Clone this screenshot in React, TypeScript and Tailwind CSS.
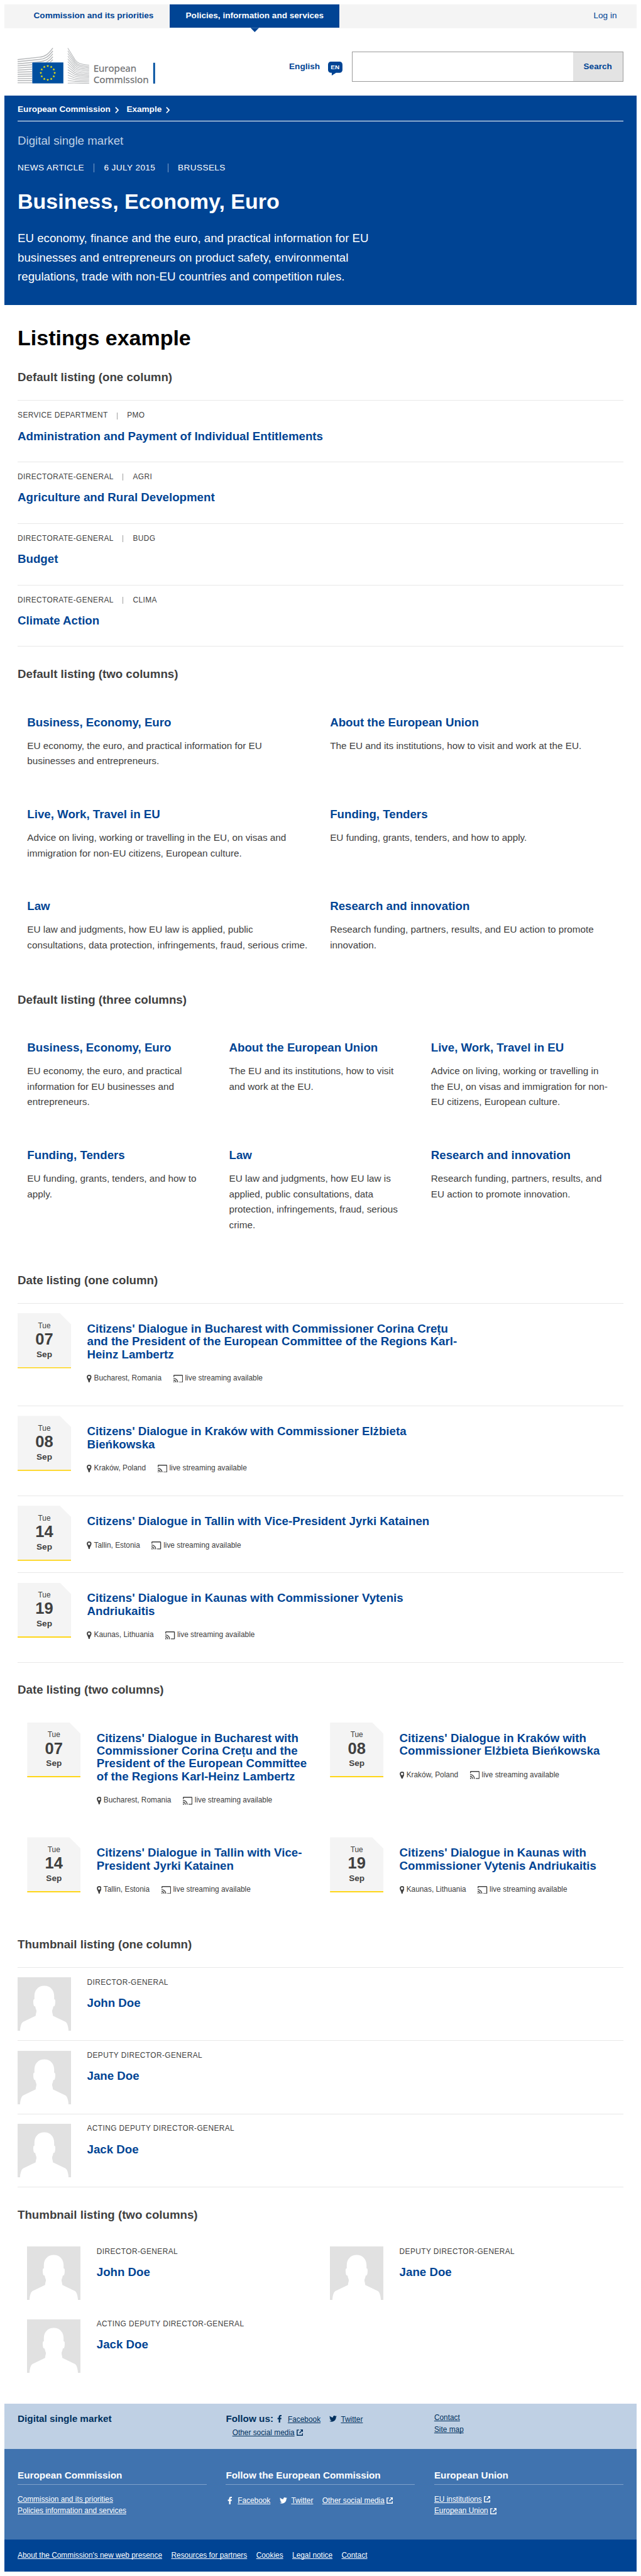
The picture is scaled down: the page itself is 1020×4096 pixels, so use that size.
import React from "react";
import { FaFacebookF, FaTwitter } from "react-icons/fa";

const topics = {
  business: {
    title: "Business, Economy, Euro",
    text: "EU economy, the euro, and practical information for EU businesses and entrepreneurs.",
  },
  about: {
    title: "About the European Union",
    text: "The EU and its institutions, how to visit and work at the EU.",
  },
  live: {
    title: "Live, Work, Travel in EU",
    text: "Advice on living, working or travelling in the EU, on visas and immigration for non-EU citizens, European culture.",
  },
  funding: {
    title: "Funding, Tenders",
    text: "EU funding, grants, tenders, and how to apply.",
  },
  law: {
    title: "Law",
    text: "EU law and judgments, how EU law is applied, public consultations, data protection, infringements, fraud, serious crime.",
  },
  research: {
    title: "Research and innovation",
    text: "Research funding, partners, results, and EU action to promote innovation.",
  },
};

const topicList = [
  topics.business,
  topics.about,
  topics.live,
  topics.funding,
  topics.law,
  topics.research,
];

const departments = [
  { kind: "Service Department", code: "PMO", title: "Administration and Payment of Individual Entitlements" },
  { kind: "Directorate-General", code: "AGRI", title: "Agriculture and Rural Development" },
  { kind: "Directorate-General", code: "BUDG", title: "Budget" },
  { kind: "Directorate-General", code: "CLIMA", title: "Climate Action" },
];

const events = [
  {
    day: "07",
    title:
      "Citizens' Dialogue in Bucharest with Commissioner Corina Crețu and the President of the European Committee of the Regions Karl-Heinz Lambertz",
    place: "Bucharest, Romania",
  },
  {
    day: "08",
    title: "Citizens' Dialogue in Kraków with Commissioner Elżbieta Bieńkowska",
    place: "Kraków, Poland",
  },
  {
    day: "14",
    title: "Citizens' Dialogue in Tallin with Vice-President Jyrki Katainen",
    place: "Tallin, Estonia",
  },
  {
    day: "19",
    title: "Citizens' Dialogue in Kaunas with Commissioner Vytenis Andriukaitis",
    place: "Kaunas, Lithuania",
  },
];

const people = [
  { role: "Director-General", name: "John Doe" },
  { role: "Deputy Director-General", name: "Jane Doe" },
  { role: "Acting Deputy Director-General", name: "Jack Doe" },
];

function starPoints(cx: number, cy: number, r: number) {
  return Array.from({ length: 10 }, (_, i) => {
    const a = (Math.PI / 5) * i - Math.PI / 2;
    const q = i % 2 === 0 ? r : r * 0.4;
    return `${(cx + q * Math.cos(a)).toFixed(2)},${(cy + q * Math.sin(a)).toFixed(2)}`;
  }).join(" ");
}

function Logo() {
  const left = Array.from({ length: 12 }, (_, i) => {
    const y = 22 + i * 3.95;
    const rise = Math.max(0, 1 - i / 11);
    const mid = y - 4.5 * rise;
    const end = i < 6 ? 0.5 + i * 5.4 : mid;
    return i < 6
      ? `M0 ${y} L41 ${mid} C52 ${mid - 1} 58 ${mid - 6 + i * 0.6} 66 ${end}`
      : `M0 ${y} L66 ${mid}`;
  });
  const right = Array.from({ length: 14 }, (_, i) => {
    const y0 = 0.5 + i * 5.05;
    const y1 = 32.6 + i * 2.6;
    const t = i / 13;
    const ky = 27 + i * 3;
    return `M94 ${y0} L${108 - 2 * t} ${ky - 4 + 4 * t} C${112} ${ky + 2 - 2 * t} ${116} ${y1 - 2.4 * (1 - t)} 134 ${y1}`;
  });
  return (
    <svg className="block h-[76px] w-[258px] shrink-0" viewBox="0 0 258 76">
      <g fill="none" stroke="#b5b7b9">
        {left.map((d) => (
          <path key={d} d={d} strokeWidth="1.7" />
        ))}
        {right.map((d) => (
          <path key={d} d={d} strokeWidth="1.2" />
        ))}
      </g>
      <rect x="27" y="27" width="59.2" height="40" fill="#fff" />
      <rect x="27.5" y="27.4" width="58.2" height="39.2" fill="#004f9f" />
      {Array.from({ length: 12 }, (_, i) => {
        const a = (Math.PI / 6) * i;
        return (
          <polygon
            key={i}
            points={starPoints(56.5 + 13 * Math.cos(a), 47 + 13 * Math.sin(a), 2.6)}
            fill="#ffed00"
          />
        );
      })}
      <g fill="#6a6b6e" stroke="#6a6b6e" strokeWidth="0.3" fontFamily="'Open Sans', sans-serif" fontSize="17.2">
        <text x="142" y="45.3" textLength="80.5" lengthAdjust="spacingAndGlyphs">
          European
        </text>
        <text x="142" y="66" textLength="103.5" lengthAdjust="spacingAndGlyphs">
          Commission
        </text>
      </g>
      <rect x="254" y="28" width="3.4" height="39" fill="#004f9f" />
    </svg>
  );
}

function Chevron() {
  return (
    <svg className="h-[12px] w-[8px]" viewBox="0 0 8 12" fill="none" stroke="#fff" strokeWidth="2">
      <path d="M1 0.8 6 6 1 11.2" />
    </svg>
  );
}

function ExternalIcon() {
  return (
    <svg className="h-[12px] w-[12px]" viewBox="0 0 12 12" fill="none" stroke="currentColor">
      <path d="M4.5 1H1v10h10V7.2" strokeWidth="1.7" />
      <path d="M5.3 6.8 9.2 2.9" strokeWidth="1.9" />
      <path d="M6.6 0H12v5.4z" fill="currentColor" stroke="none" />
    </svg>
  );
}

function PinIcon() {
  return (
    <svg className="h-[14px] w-[9px]" viewBox="0 0 9 14">
      <path
        fill="#404040"
        fillRule="evenodd"
        d="M4.5 0A4.4 4.4 0 0 0 .1 4.4C.1 7.2 2.9 9.5 3.5 14h2C6.1 9.5 8.9 7.2 8.9 4.4A4.4 4.4 0 0 0 4.5 0zm0 2.2a2.2 2.3 0 1 1 0 4.6 2.2 2.3 0 0 1 0-4.6z"
      />
    </svg>
  );
}

function CastIcon() {
  return (
    <svg className="h-[15px] w-[18px]" viewBox="1 3 22 18" fill="#404040">
      <path d="M1 18v3h3c0-1.66-1.34-3-3-3zm0-4v2c2.76 0 5 2.24 5 5h2c0-3.87-3.13-7-7-7zm0-4v2c4.97 0 9 4.03 9 9h2c0-6.08-4.93-11-11-11zm20-7H3c-1.1 0-2 .9-2 2v3h2V5h18v14h-7v2h7c1.1 0 2-.9 2-2V5c0-1.1-.9-2-2-2z" />
    </svg>
  );
}

function Avatar() {
  return (
    <svg className="block h-[100px] w-[100px] shrink-0 bg-[#e1e1e1]" viewBox="0 0 100 100">
      <path
        fill="#fff"
        d="M50 16C38 16 31.5 25 31.5 35V41C29 41 29.3 45 29.5 48 29.8 52 30.5 55 33 54.5 33.6 58 34.5 60 35.2 62 35.8 65 34.2 67 33.8 72L10 83.5C6.5 86 4.8 94 4.6 100H95.4C95.2 94 93.5 86 90 83.5L66.2 72C65.8 67 64.2 65 64.8 62 65.5 60 66.4 58 67 54.5 69.5 55 70.2 52 70.5 48 70.7 45 71 41 68.5 41V35C68.5 25 62 16 50 16z"
      />
    </svg>
  );
}

function SectionTitle({ children }: { children: React.ReactNode }) {
  return <h2 className="text-[22px] leading-[28px] font-bold text-[#404040]">{children}</h2>;
}

function Topic({ title, text }: { title: string; text: string }) {
  return (
    <div className="px-[18px] pt-[36px] pb-[35px]">
      <h3 className="text-[22px] leading-[28px] font-bold text-[#004494]">{title}</h3>
      <p className="mt-[15.5px] text-[18px] leading-[28.8px] text-[#404040]">{text}</p>
    </div>
  );
}

function DateBlock({ day }: { day: string }) {
  return (
    <div className="flex h-[103px] w-[100px] shrink-0 flex-col items-center border-b-[3px] border-[#ffd617] bg-[#f4f4f4] pt-[16px] text-[#404040] [clip-path:polygon(0_0,79px_0,100px_21px,100px_103px,0_103px)]">
      <span className="text-[14px] leading-[16px]">Tue</span>
      <span className="mt-[2px] text-[30px] leading-[30px] font-bold">{day}</span>
      <span className="mt-[2.5px] text-[16px] leading-[20px] font-bold">Sep</span>
    </div>
  );
}

function EventBody({ title, place }: { title: string; place: string }) {
  return (
    <div className="ml-[30px] max-w-[700px] pt-[17.5px] pb-[42.5px]">
      <h3 className="text-[22px] leading-[24px] font-bold text-[#004494]">{title}</h3>
      <div className="mt-[25px] flex h-[16px] items-center text-[14px] leading-[16px] whitespace-nowrap text-[#404040]">
        <PinIcon />
        <span className="ml-[4px]">{place}</span>
        <span className="ml-[22px]">
          <CastIcon />
        </span>
        <span className="ml-[4px]">live streaming available</span>
      </div>
    </div>
  );
}

function PersonBody({ role, name }: { role: string; name: string }) {
  return (
    <div className="ml-[30px] pt-[1.5px]">
      <p className="text-[14px] leading-[16px] tracking-[0.5px] text-[#404040] uppercase">{role}</p>
      <h3 className="mt-[16px] text-[22px] leading-[28px] font-bold text-[#004494]">{name}</h3>
    </div>
  );
}

function Link({ children }: { children: React.ReactNode }) {
  return <a className="self-start underline [text-decoration-skip-ink:none]">{children}</a>;
}

function Header() {
  return (
    <header>
      <nav className="flex h-[45px] bg-[#f4f4f4] text-[16px] leading-[43px] whitespace-nowrap">
        <a className="w-[310px] pl-[55px] font-bold text-[#004494]">Commission and its priorities</a>
        <a className="relative h-[44px] w-[318px] bg-[#004494] text-center font-bold text-white">
          Policies, information and services
          <span className="absolute top-[44px] left-[151px] h-[8px] w-[16px] bg-[#004494] [clip-path:polygon(0_0,100%_0,50%_100%)]" />
        </a>
        <a className="mr-[37px] ml-auto text-[#004494]">Log in</a>
      </nav>
      <div className="flex h-[126px] items-start px-[25px] pt-[36px]">
        <Logo />
        <div className="mt-[7px] ml-auto flex h-[57px] items-center">
          <span className="text-[16px] leading-[57px] font-bold text-[#004494]">English</span>
          <svg className="mt-[7px] mr-[18px] ml-[15px] h-[26px] w-[27px]" viewBox="0 0 27 26">
            <path
              fill="#004494"
              d="M5.5 0h16A5.5 5.5 0 0 1 27 5.500v10a5.500 5.500 0 0 1-5.500 5.500H15l-8 5v-5H5.500A5.500 5.500 0 0 1 0 15.500v-10A5.500 5.500 0 0 1 5.500 0z"
            />
            <text
              x="13.2"
              y="14.6"
              fill="#fff"
              textAnchor="middle"
              fontFamily="'Liberation Sans', sans-serif"
              fontSize="11.6"
              fontWeight="700"
            >
              EN
            </text>
          </svg>
          <div className="flex h-[57px] w-[508px] border border-[#9a9a9a]">
            <div className="flex-1 bg-white" />
            <button className="w-[93px] bg-[#e3e3e3] text-[16px] leading-[55px] font-bold text-[#004494]">
              Search
            </button>
          </div>
        </div>
      </div>
    </header>
  );
}

function Hero() {
  return (
    <section className="h-[392px] bg-[#004494] px-[25px] text-white">
      <div className="flex h-[48px] items-start border-b border-white pt-[14px] text-[16px] leading-[24px] font-bold">
        <span>European Commission</span>
        <span className="mt-[7px] mr-[14px] ml-[8px]">
          <Chevron />
        </span>
        <span>Example</span>
        <span className="mt-[7px] ml-[8px]">
          <Chevron />
        </span>
      </div>
      <p className="mt-[22px] text-[22px] leading-[28px] text-[#bfd0e4]">Digital single market</p>
      <div className="mt-[29px] flex items-center text-[16px] leading-[16px] tracking-[0.5px] uppercase">
        <span>News article</span>
        <span className="mr-[18px] ml-[18px] h-[16px] w-px bg-[#7fa1c9]" />
        <span>6 July 2015</span>
        <span className="mr-[18px] ml-[23px] h-[16px] w-px bg-[#7fa1c9]" />
        <span>Brussels</span>
      </div>
      <h1 className="mt-[31px] text-[40px] leading-[48px] font-bold">Business, Economy, Euro</h1>
      <p className="mt-[27.5px] w-[700px] text-[22px] leading-[36px]">
        EU economy, finance and the euro, and practical information for EU businesses and
        entrepreneurs on product safety, environmental regulations, trade with non-EU countries and
        competition rules.
      </p>
    </section>
  );
}

function Footer() {
  return (
    <footer className="text-[14px]">
      <div className="grid h-[84px] grid-cols-3 gap-x-[36px] bg-[#bfd0e4] px-[25px] text-[#00305e]">
        <h4 className="pt-[16px] text-[18px] leading-[24px] font-bold">Digital single market</h4>
        <div className="pt-[16px] whitespace-nowrap">
          <div className="flex h-[24px] items-baseline leading-[24px]">
            <span className="text-[18px] font-bold">Follow us:</span>
            <span className="mr-[11px] ml-[7px] self-center">
              <FaFacebookF className="h-[14px] w-[9px]" />
            </span>
            <a className="underline [text-decoration-skip-ink:none]">Facebook</a>
            <span className="mr-[8px] ml-[16px] self-center">
              <FaTwitter className="h-[14px] w-[14px]" />
            </span>
            <a className="underline [text-decoration-skip-ink:none]">Twitter</a>
          </div>
          <div className="mt-[1.5px] flex h-[24px] items-center pl-[12px] leading-[24px]">
            <Link>Other social media</Link>
            <span className="ml-[4px]">
              <ExternalIcon />
            </span>
          </div>
        </div>
        <div className="flex flex-col pt-[15.5px] leading-[22px]">
          <Link>Contact</Link>
          <Link>Site map</Link>
        </div>
      </div>
      <div className="grid h-[170px] grid-cols-3 gap-x-[36px] bg-[#4073af] px-[25px] pt-[38px] text-white">
        <div>
          <h4 className="h-[30px] border-b-2 border-[#7fa1c9] text-[18px] leading-[24px] font-bold">
            European Commission
          </h4>
          <div className="mt-[15.5px] flex flex-col leading-[22px]">
            <Link>Commission and its priorities</Link>
            <Link>Policies information and services</Link>
          </div>
        </div>
        <div>
          <h4 className="h-[30px] border-b-2 border-[#7fa1c9] text-[18px] leading-[24px] font-bold">
            Follow the European Commission
          </h4>
          <div className="mt-[18px] flex items-center pl-[3px] leading-[22px] whitespace-nowrap">
            <FaFacebookF className="mr-[10px] h-[14px] w-[9px]" />
            <Link>Facebook</Link>
            <FaTwitter className="mr-[8px] ml-[17px] h-[14px] w-[14px]" />
            <Link>Twitter</Link>
            <span className="ml-[17px]">
              <Link>Other social media</Link>
            </span>
            <span className="ml-[4px]">
              <ExternalIcon />
            </span>
          </div>
        </div>
        <div>
          <h4 className="h-[30px] border-b-2 border-[#7fa1c9] text-[18px] leading-[24px] font-bold">
            European Union
          </h4>
          <div className="mt-[15.5px] leading-[22px]">
            <div className="flex items-center gap-[4px]">
              <Link>EU institutions</Link>
              <ExternalIcon />
            </div>
            <div className="flex items-center gap-[4px]">
              <Link>European Union</Link>
              <ExternalIcon />
            </div>
          </div>
        </div>
      </div>
      <div className="flex h-[60px] gap-[17px] bg-[#004494] px-[25px] leading-[60px] text-white">
        <Link>About the Commission's new web presence</Link>
        <Link>Resources for partners</Link>
        <Link>Cookies</Link>
        <Link>Legal notice</Link>
        <Link>Contact</Link>
      </div>
    </footer>
  );
}

export default function App() {
  return (
    <div className="h-[4820px] w-[1200px] bg-white px-[8px] pt-[8px] font-['Liberation_Sans',Arial,sans-serif] [zoom:0.8498]">
      <Header />
      <Hero />
      <main className="px-[25px] pt-[38px]">
        <h1 className="h-[83px] text-[40px] leading-[48px] font-bold text-black">Listings example</h1>

        <section className="h-[555px]">
          <SectionTitle>Default listing (one column)</SectionTitle>
          <div className="mt-[29px] border-t border-[#e8e8e8]">
            {departments.map((d) => (
              <div key={d.title} className="h-[115px] border-b border-[#e8e8e8] pt-[20px]">
                <div className="flex h-[16px] items-center text-[14px] leading-[16px] tracking-[0.5px] text-[#404040] uppercase">
                  <span>{d.kind}</span>
                  <span className="mr-[18px] ml-[17px] h-[13px] w-px bg-[#9f9f9f]" />
                  <span>{d.code}</span>
                </div>
                <h3 className="mt-[16px] text-[22px] leading-[28px] font-bold text-[#004494]">{d.title}</h3>
              </div>
            ))}
          </div>
        </section>

        <section className="h-[610px]">
          <SectionTitle>Default listing (two columns)</SectionTitle>
          <div className="mt-[27px] grid grid-cols-2">
            {topicList.map((t) => (
              <Topic key={t.title} {...t} />
            ))}
          </div>
        </section>

        <section className="h-[525px]">
          <SectionTitle>Default listing (three columns)</SectionTitle>
          <div className="mt-[26px] grid grid-cols-3">
            {topicList.map((t) => (
              <Topic key={t.title} {...t} />
            ))}
          </div>
        </section>

        <section className="h-[766px]">
          <SectionTitle>Date listing (one column)</SectionTitle>
          <div className="mt-[28px] border-t border-[#e8e8e8]">
            {events.map((e) => (
              <div key={e.day} className="flex items-start border-b border-[#e8e8e8] pt-[18px]">
                <DateBlock day={e.day} />
                <EventBody title={e.title} place={e.place} />
              </div>
            ))}
          </div>
        </section>

        <section className="h-[476px]">
          <SectionTitle>Date listing (two columns)</SectionTitle>
          <div className="mt-[29px] grid grid-cols-2">
            {events.map((e) => (
              <div key={e.day} className="flex items-start px-[18px] pt-[18px]">
                <DateBlock day={e.day} />
                <EventBody title={e.title} place={e.place} />
              </div>
            ))}
          </div>
        </section>

        <section className="h-[507px]">
          <SectionTitle>Thumbnail listing (one column)</SectionTitle>
          <div className="mt-[29px] border-t border-[#e8e8e8]">
            {people.map((p) => (
              <div key={p.name} className="flex h-[137px] border-b border-[#e8e8e8] pt-[18px]">
                <Avatar />
                <PersonBody {...p} />
              </div>
            ))}
          </div>
        </section>

        <section className="h-[367px]">
          <SectionTitle>Thumbnail listing (two columns)</SectionTitle>
          <div className="mt-[27px] grid grid-cols-2">
            {people.map((p) => (
              <div key={p.name} className="flex p-[18px]">
                <Avatar />
                <PersonBody {...p} />
              </div>
            ))}
          </div>
        </section>
      </main>
      <Footer />
    </div>
  );
}
